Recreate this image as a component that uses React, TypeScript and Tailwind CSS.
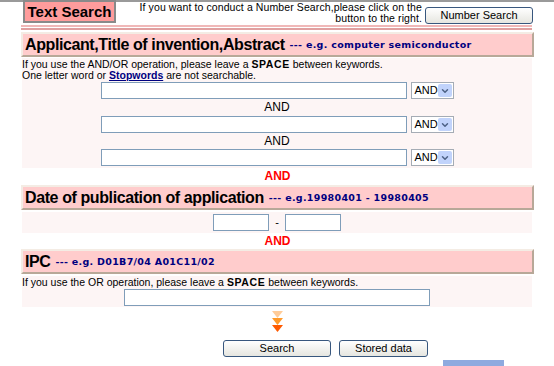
import { ChevronDown } from "lucide-react";

const small = "font-['Liberation_Sans',Arial,sans-serif]";

function AndSelect() {
  return (
    <div className="flex h-[17px] w-[43px] items-center justify-between border border-[#a5acb5] bg-white pl-[3px] pr-px text-[11px] leading-none text-black">
      <span>AND</span>
      <span className="flex h-[13px] w-[14px] items-center justify-center rounded-[2px] bg-[#c1d3fb]">
        <ChevronDown className="h-[10px] w-[10px] text-[#4d6185]" strokeWidth={3.5} />
      </span>
    </div>
  );
}

function SectionHeader({ title, example }: { title: string; example: string }) {
  return (
    <div className="flex h-[25px] items-center border-2 border-t-[#f4ece4] border-l-[#f4ece4] border-b-[#b8a898] border-r-[#b8a898] bg-[#ffcccc] pl-[2px]">
      <span className="text-[16px] font-bold leading-none tracking-[-0.4px] text-black">{title}</span>
      <span className="ml-[5px] mt-[2px] font-['DejaVu_Sans',sans-serif] text-[9.5px] font-bold tracking-[0.3px] text-[#000080]">
        {example}
      </span>
    </div>
  );
}

function TextBox({ w }: { w: string }) {
  return <div className={`h-[17px] ${w} border border-[#7f9db9] bg-white`} />;
}

function Button({ label, w }: { label: string; w: string }) {
  return (
    <div
      className={`flex h-[17px] ${w} items-center justify-center rounded-[3px] border border-[#38577e] bg-gradient-to-b from-white to-[#e6e6e0] text-[11px] leading-none text-black`}
    >
      {label}
    </div>
  );
}

function Arrow({ color }: { color: string }) {
  return (
    <svg width="11" height="7" viewBox="0 0 11 7" className="block">
      <polygon points="0,0 11,0 5.5,7" fill={color} />
    </svg>
  );
}

export default function App() {
  return (
    <div className={`h-[366px] w-[554px] overflow-hidden bg-white ${small}`}>
      {/* top strip */}
      <div className="h-[2px] w-full bg-[#9a9a9a]" />

      <div className="ml-[21px] w-[513px]">
        {/* title row */}
        <div className="flex h-[22px] items-start">
          <div className="-mt-[2px] ml-[2px] flex h-[23px] w-[93px] items-center justify-center border-2 border-[#8a8a8a] bg-[#ff9c9c] text-[15px] font-bold leading-none text-black">
            Text Search
          </div>
          <div className="ml-auto text-right text-[10.5px] leading-[11px] tracking-[0.1px] text-black">
            <div>If you want to conduct a Number Search,please click on the</div>
            <div>button to the right.</div>
          </div>
          <div className="ml-[3px] mr-px mt-[5px]">
            <Button label="Number Search" w="w-[108px]" />
          </div>
        </div>

        {/* double rule */}
        <div className="mt-[1px] h-[2px] w-[511px] bg-[#f0b8b8]" />
        <div className="mt-[1px] h-[2px] w-[511px] bg-[#e0a0a0]" />

        {/* section 1 */}
        <div className="mt-[2px]">
          <SectionHeader title="Applicant,Title of invention,Abstract" example="--- e.g. computer semiconductor" />
        </div>
        <div className="ml-px mt-px h-[110px] w-[510px] bg-[#fdf5f5] pt-[1px]">
          <div className="text-[10.5px] leading-[11px] text-black">
            If you use the AND/OR operation, please leave a <b className="tracking-[0.6px]">SPACE</b> between keywords.
          </div>
          <div className="text-[10.5px] leading-[11px] text-black">
            One letter word or{" "}
            <span className="font-bold text-[#000080] underline">Stopwords</span> are not searchable.
          </div>
          <div className="mt-[1px] flex flex-col items-center">
            <div className="flex items-center gap-[4px]">
              <TextBox w="w-[306px]" />
              <AndSelect />
            </div>
            <div className="h-[17px] text-[12px] leading-[17px] text-black">AND</div>
            <div className="flex items-center gap-[4px]">
              <TextBox w="w-[306px]" />
              <AndSelect />
            </div>
            <div className="h-[16px] text-[12px] leading-[16px] text-black">AND</div>
            <div className="flex items-center gap-[4px]">
              <TextBox w="w-[306px]" />
              <AndSelect />
            </div>
          </div>
        </div>

        <div className="h-[17px] text-center text-[12px] font-bold leading-[17px] text-[#ff0000]">AND</div>

        {/* section 2 */}
        <SectionHeader title="Date of publication of application" example="--- e.g.19980401 - 19980405" />
        <div className="ml-px mt-[2px] flex h-[21px] w-[510px] items-center justify-center bg-[#fdf5f5]">
          <TextBox w="w-[56px]" />
          <span className="mx-[6px] text-[11px] leading-none">-</span>
          <TextBox w="w-[56px]" />
        </div>

        <div className="h-[16px] text-center text-[12px] font-bold leading-[16px] text-[#ff0000]">AND</div>

        {/* section 3 */}
        <SectionHeader title="IPC" example="--- e.g. D01B7/04 A01C11/02" />
        <div className="ml-px mt-[2px] w-[510px] bg-[#fdf5f5]">
          <div className="text-[10.5px] leading-[13px] text-black">
            If you use the OR operation, please leave a <b className="tracking-[0.6px]">SPACE</b> between keywords.
          </div>
          <div className="flex h-[18px] justify-center pb-px">
            <TextBox w="w-[306px]" />
          </div>
        </div>

        {/* arrows */}
        <div className="mt-[4px] flex flex-col items-center">
          <Arrow color="#ffcc99" />
          <Arrow color="#ff9a2a" />
          <Arrow color="#ff5a00" />
        </div>

        {/* buttons */}
        <div className="ml-[202px] mt-[8px] flex gap-[8px]">
          <Button label="Search" w="w-[108px]" />
          <Button label="Stored data" w="w-[89px]" />
        </div>

        <div className="ml-[422px] mt-[3px] h-[8px] w-[61px] bg-[#8eaadf]" />
      </div>
    </div>
  );
}
